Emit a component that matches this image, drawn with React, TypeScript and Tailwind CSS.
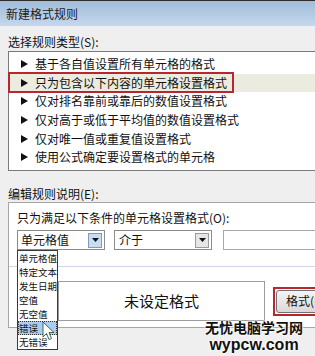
import React from "react";

const ruleTypes = [
  "基于各自值设置所有单元格的格式",
  "只为包含以下内容的单元格设置格式",
  "仅对排名靠前或靠后的数值设置格式",
  "仅对高于或低于平均值的数值设置格式",
  "仅对唯一值或重复值设置格式",
  "使用公式确定要设置格式的单元格",
];

const options = ["单元格值", "特定文本", "发生日期", "空值", "无空值", "错误", "无错误"];

function Arrow() {
  return (
    <svg width="7" height="8" viewBox="0 0 7 8" className="shrink-0">
      <path d="M0 0 L7 4 L0 8 Z" fill="#111" />
    </svg>
  );
}

function DropButton({ blue }: { blue?: boolean }) {
  return (
    <div
      className={`w-[14px] h-[15px] flex items-center justify-center border ${
        blue ? "bg-[#c9ddf2] border-[#7d9bc0]" : "bg-[#e6e6e6] border-[#9a9a9a]"
      }`}
    >
      <svg width="7" height="4" viewBox="0 0 7 4">
        <path d="M0 0 L7 0 L3.5 4 Z" fill="#111" />
      </svg>
    </div>
  );
}

export default function App() {
  return (
    <div
      className="relative w-[315px] h-[356px] overflow-hidden bg-[#efefef] text-[#111]"
      style={{ fontFamily: '"Noto Sans CJK SC", "Noto Sans", sans-serif' }}
    >
      <div className="w-[340px]">
        {/* Title bar */}
        <div className="h-[26px] border-t border-[#2e2e2e] bg-gradient-to-b from-[#a3bcda] to-[#c4d8ed] flex items-center px-[6px] text-[12px] text-[#1a1a1a]">
          新建格式规则
        </div>

        <div className="pl-[8px]">
          <div className="mt-[8px] text-[12px] leading-[16px]">选择规则类型(S):</div>

          {/* Rule type list */}
          <div className="mt-[1px] border border-[#7a7a7a] bg-white pt-[3px] pb-[2px] h-[120px]">
            {ruleTypes.map((t, i) => (
              <div
                key={i}
                className={`relative h-[18.6px] flex items-center pl-[12px] gap-[7px] text-[12px] ${
                  i === 1 ? "bg-[#ecebdf]" : ""
                }`}
              >
                <Arrow />
                <span>{t}</span>
                {i === 1 && (
                  <div className="absolute left-[-1px] top-[-2px] bottom-[-1px] w-[226px] border-2 border-[#b8272d]" />
                )}
              </div>
            ))}
          </div>

          <div className="mt-[15px] text-[12px] leading-[16px]">编辑规则说明(E):</div>

          {/* Rule description box */}
          <div className="border border-[#a5a5a5] bg-white pl-[8px] pt-[7px] pb-[6px]">
            <div className="text-[12px] leading-[16px]">只为满足以下条件的单元格设置格式(O):</div>

            <div className="mt-[4px] flex items-center">
              <div className="shrink-0 w-[88px] h-[20px] border border-[#8c8c8c] flex items-center justify-between pl-[3px] pr-[2px] text-[12px]">
                <span>单元格值</span>
                <DropButton blue />
              </div>
              <div className="shrink-0 ml-[9px] w-[98px] h-[20px] border border-[#8c8c8c] flex items-center justify-between pl-[4px] pr-[2px] text-[12px]">
                <span>介于</span>
                <DropButton />
              </div>
              <div className="shrink-0 ml-[11px] w-[120px] h-[20px] border border-[#a8a8a8]" />
            </div>

            <div className="mt-[16px] -ml-[8px] h-px bg-[#cdd8e4]" />

            <div className="mt-[14px] flex items-center">
              <div className="shrink-0 ml-[41px] w-[207px] h-[40px] border border-[#9c9c9c] flex items-center justify-center text-[15px]">
                未设定格式
              </div>
              <div className="shrink-0 ml-[8px] h-[29px] border-2 border-[#b8272d] p-[1px] flex items-center">
                <div className="h-full pl-[9px] pr-[10px] rounded-[3px] border border-[#707070] bg-gradient-to-b from-[#f4f4f4] to-[#d9d9d9] flex items-center text-[12px] whitespace-nowrap">
                  格式(F)...
                </div>
              </div>
            </div>
          </div>
        </div>
      </div>

      {/* Open dropdown list */}
      <div className="absolute left-[17px] top-[250px] w-[41px] border border-[#3a3a3a] bg-white overflow-hidden">
        {options.map((o, i) => (
          <div
            key={i}
            className={`h-[14px] pl-[1px] text-[9.5px] leading-[14px] whitespace-nowrap ${
              i === 5 ? "bg-[#a7cdf0] outline outline-1 outline-dotted outline-[#333] -outline-offset-1" : ""
            }`}
          >
            {o}
          </div>
        ))}
      </div>

      {/* Mouse cursor */}
      <svg className="absolute left-[42px] top-[321px]" width="13" height="21" viewBox="0 0 13 21">
        <path
          d="M1 1 L1 16 L4.5 12.5 L7 18.5 L9.5 17.5 L7 11.5 L12 11.5 Z"
          fill="#ffffff"
          stroke="#3d6a52"
          strokeWidth="1"
          strokeLinejoin="round"
        />
      </svg>

      {/* Watermark */}
      <div className="absolute left-[203px] top-[319px] w-[102px] flex flex-col items-center [text-shadow:0_0_2px_#fff,0_0_2px_#fff,0_0_3px_#fff]">
        <div className="text-[14px] leading-[17px] font-bold">无忧电脑学习网</div>
        <div
          className="text-[16px] leading-[17px] font-bold"
          style={{ fontFamily: '"Liberation Sans", Arial, sans-serif' }}
        >
          wypcw.com
        </div>
      </div>
    </div>
  );
}
